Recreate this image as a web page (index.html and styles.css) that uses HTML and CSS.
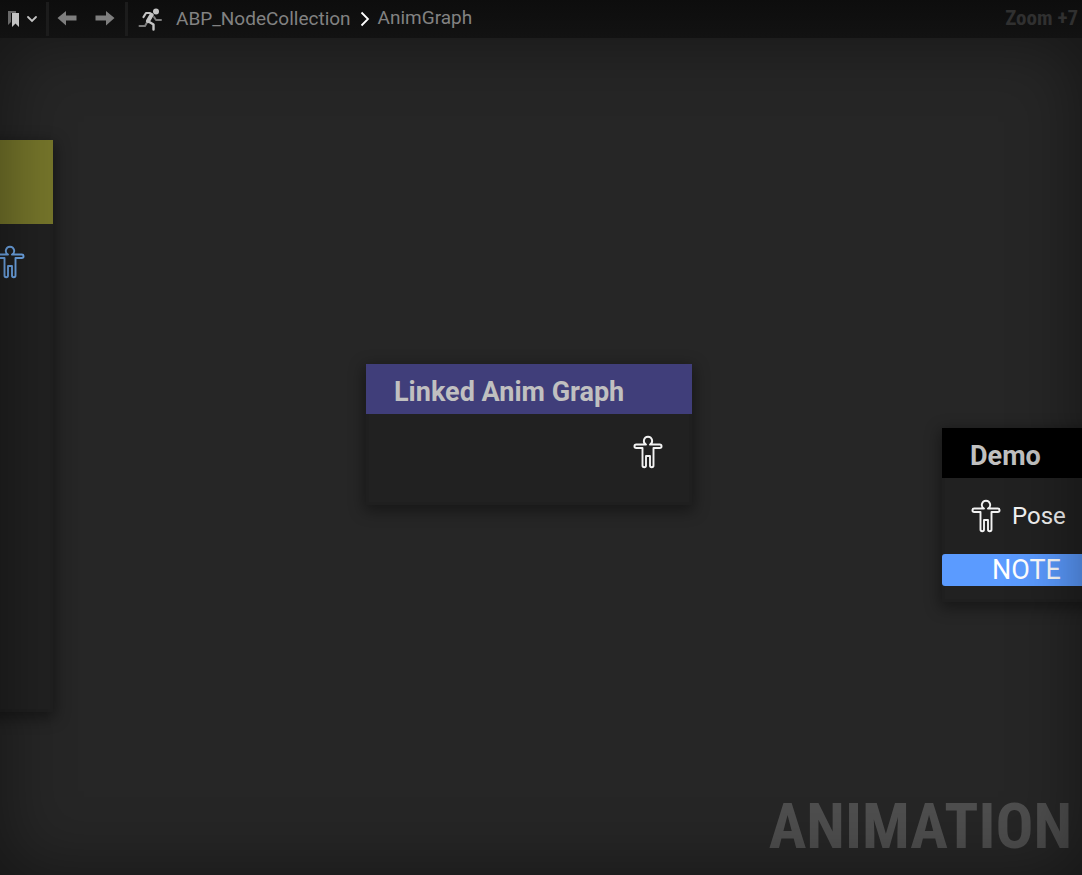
FILE: index.html
```html
<!DOCTYPE html>
<html lang="en">
<head>
<meta charset="utf-8">
<title>AnimGraph</title>
<link rel="stylesheet" href="styles.css">
</head>
<body>
<svg class="defs" aria-hidden="true">
  <symbol id="pose" viewBox="0 0 30 34">
    <path d="M13 9.500C9.200 7.500 10.800 1.700 15 1.700s5.800 5.800 2 7.800H26.800a1.700 1.700 0 0 1 0 3.500H20.500V30.500a1.700 1.700 0 0 1-3.500 0V21H13V30.500a1.700 1.700 0 0 1-3.500 0V13H3.200a1.700 1.700 0 0 1 0-3.500Z" fill="none" stroke="currentColor" stroke-width="1.900" stroke-linejoin="round"/>
  </symbol>
</svg>
<div class="editor">
  <header class="toolbar">
    <button class="tool bookmark" aria-label="Bookmarks">
      <svg width="32" height="20" viewBox="0 0 32 20">
        <path d="M1 2h8v2H4v9l-3 3Z" fill="#686868"/>
        <path d="M5 4h7v14l-3.500-3.500L5 18Z" fill="#c4c4c4"/>
        <path d="m21 8 4 4 4-4" fill="none" stroke="#c4c4c4" stroke-width="1.800" stroke-linecap="round"/>
      </svg>
    </button>
    <div class="history">
      <button class="tool" aria-label="Back"><svg width="20" height="16" viewBox="0 0 20 16"><path d="M.5 7 9 0v4.500h10.500v5H9V14.500Z" fill="#7e7e7e"/></svg></button>
      <button class="tool" aria-label="Forward"><svg width="20" height="16" viewBox="0 0 20 16"><path d="M19.500 7 11 0v4.500H.5v5H11V14.500Z" fill="#7e7e7e"/></svg></button>
    </div>
    <nav class="crumbs" aria-label="Breadcrumb">
      <svg width="24" height="24" viewBox="0 0 24 24" fill="none" stroke="#c4c4c4" stroke-linecap="round" stroke-linejoin="round">
        <path d="M1.500 19H7l2-3.500" stroke="#7e7e7e" stroke-width="2"/>
        <path d="m16 10 2 3h5" stroke="#7e7e7e" stroke-width="2"/>
        <path d="m5.500 10 2.500-4h4l2.500 2" stroke-width="2.200"/>
        <path d="m13.500 8-3.500 6" stroke-width="4.200"/>
        <path d="m10.500 14.500 5 3v5" stroke-width="2.400"/>
        <circle cx="18" cy="4.500" r="3" fill="#c4c4c4" stroke="none"/>
      </svg>
      <a class="crumb" href="#">ABP_NodeCollection</a>
      <svg class="chevron" width="10" height="16" viewBox="0 0 10 16"><path d="m1.500 1.500 6.500 6.500-6.500 6.500" fill="none" stroke="#fff" stroke-width="1.800"/></svg>
      <a class="crumb last" href="#">AnimGraph</a>
    </nav>
    <span class="zoom">Zoom +7</span>
  </header>
  <main class="canvas">
    <section class="node output">
      <div class="node-head"></div>
      <div class="pin"><svg class="pose"><use href="#pose"/></svg></div>
    </section>
    <section class="node linked">
      <h2 class="node-head">Linked Anim Graph</h2>
      <div class="pin"><svg class="pose"><use href="#pose"/></svg></div>
    </section>
    <section class="node demo">
      <h2 class="node-head">Demo</h2>
      <div class="pin"><svg class="pose"><use href="#pose"/></svg><span>Pose</span></div>
      <div class="note">NOTE</div>
    </section>
    <div class="watermark">ANIMATION</div>
    <div class="vignette"></div>
  </main>
</div>
</body>
</html>
```
FILE: styles.css
```css
* { box-sizing: border-box; }

body {
  margin: 0;
  background: #262626;
  font-family: Roboto, "Liberation Sans", sans-serif;
}

.defs {
  position: absolute;
  width: 0;
  height: 0;
}

.editor {
  display: flex;
  flex-direction: column;
  height: 100vh;
  overflow: hidden;
}

.toolbar {
  display: flex;
  align-items: center;
  height: 38px;
  flex: none;
  padding-right: 4px;
  background: linear-gradient(#0d0d0d, #121212);
}

.tool {
  display: flex;
  padding: 0;
  border: 0;
  background: none;
}

.bookmark { padding: 0 7px; }

.history {
  display: flex;
  align-items: center;
  gap: 18px;
  height: 34px;
  padding: 0 10px 0 8px;
  border: solid #1c1c1c;
  border-width: 0 3px;
}

.crumbs {
  display: flex;
  align-items: center;
  padding-left: 10px;
}

.crumb {
  margin-left: 14px;
  color: #828282;
  font-size: 19px;
  line-height: 24px;
  text-decoration: none;
}

.chevron { margin-left: 9px; }

.last {
  margin-left: 8px;
  padding-bottom: 2px;
}

.zoom {
  margin-left: auto;
  padding-bottom: 2px;
  color: #303030;
  font: bold 21px "Roboto Condensed", Roboto, sans-serif;
}

.canvas {
  position: relative;
  flex: 1;
  overflow: hidden;
}

.node {
  position: absolute;
  background: #212121;
  box-shadow: 0 4px 14px 2px rgba(0, 0, 0, 0.4), inset 0 0 0 3px #1f1f1f;
}

.node-head {
  margin: 0;
  height: 50px;
  padding: 3px 28px 0;
  color: #c0c0c0;
  font-size: 27px;
  font-weight: bold;
  line-height: 50px;
}

.pin {
  display: flex;
  align-items: center;
  gap: 11px;
  height: 76px;
  padding: 0 29px;
  color: #f2f2f2;
  font-size: 24px;
}

.pose {
  width: 30px;
  height: 34px;
}

.output {
  top: 102px;
  left: -273px;
  width: 326px;
  height: 572px;
}

.output .node-head {
  height: 84px;
  background: #76762b;
}

.output .pin {
  justify-content: flex-end;
  padding-right: 28px;
  color: #71aaec;
}

.linked {
  top: 326px;
  left: 366px;
  width: 326px;
  height: 141px;
}

.linked .node-head { background: #403e7a; }
.linked .pin { justify-content: flex-end; }

.demo {
  top: 390px;
  left: 942px;
  width: 170px;
  height: 174px;
}

.demo .node-head { background: #000; }

.note {
  height: 32px;
  padding-left: 50px;
  border-radius: 3px;
  background: #5b9bff;
  color: #fff;
  font-size: 27px;
  line-height: 32px;
}

.watermark {
  position: absolute;
  right: 10px;
  bottom: 10px;
  color: #4e4e4e;
  font: bold 63px/76px "Roboto Condensed", Roboto, sans-serif;
}

.vignette {
  position: absolute;
  inset: 0;
  box-shadow: inset 0 0 70px rgba(0, 0, 0, 0.45);
  pointer-events: none;
}
```
